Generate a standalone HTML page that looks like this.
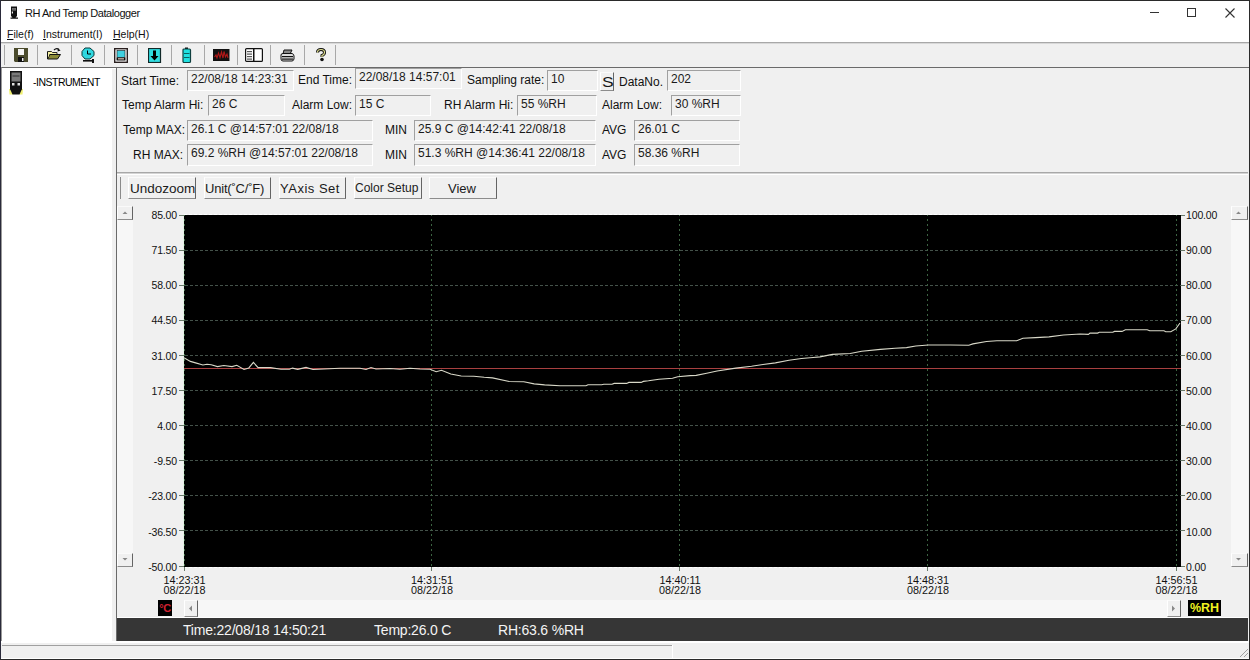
<!DOCTYPE html>
<html><head><meta charset="utf-8">
<style>
*{margin:0;padding:0;box-sizing:border-box}
html,body{width:1250px;height:660px;overflow:hidden;background:#f0f0f0;font-family:"Liberation Sans",sans-serif;color:#000}
.a{position:absolute}
.t{position:absolute;white-space:pre;line-height:1}
.lbl{position:absolute;white-space:pre;font-size:12px;line-height:1;color:#111}
.box{position:absolute;background:#f0f0f0;border-top:1px solid #a0a0a0;border-left:1px solid #a0a0a0;border-right:1px solid #fff;border-bottom:1px solid #fff}
.box span{position:absolute;left:3px;top:2px;font-size:12px;line-height:1;white-space:pre;color:#1a1a1a}
.btn{position:absolute;background:#f0f0f0;border-top:1px solid #fafafa;border-left:1px solid #fff;border-right:1px solid #646464;border-bottom:1px solid #8c8c8c;text-align:center;font-size:13px;line-height:1;color:#1a1a1a}
.sep{position:absolute;top:45px;width:1px;height:20px;background:#a8a8a8}
.ylab{position:absolute;font-size:10px;line-height:1;white-space:pre;color:#111}
</style></head><body>
<!-- title bar -->
<div class="a" style="left:0;top:0;width:1250px;height:42px;background:#fff"></div>
<div class="a" style="left:0;top:42px;width:1250px;height:1px;background:#a8a8a8"></div>
<!-- title icon -->
<svg class="a" style="left:10px;top:6px" width="9" height="14" viewBox="0 0 9 14">
<rect x="1" y="0.5" width="6" height="9.5" fill="#111"/><rect x="2" y="2" width="4" height="2.5" fill="#888"/>
<rect x="2.6" y="2.6" width="1" height="1" fill="#111"/><rect x="4.4" y="2.6" width="1" height="1" fill="#111"/>
<rect x="1.8" y="5.5" width="1.2" height="2" fill="#eee"/>
<path d="M1 10 H7 L5.5 11.5 H8 V12.8 H0.5 V11.5 H2.5 Z" fill="#111"/></svg>
<div class="t" style="left:25px;top:8px;font-size:11px;letter-spacing:-0.45px;color:#111">RH And Temp Datalogger</div>
<!-- window controls -->
<div class="a" style="left:1150px;top:12px;width:9px;height:1px;background:#333"></div>
<div class="a" style="left:1187px;top:8px;width:9px;height:9px;border:1px solid #333"></div>
<svg class="a" style="left:1225px;top:8px" width="10" height="10" viewBox="0 0 10 10"><path d="M0.5 0.5 L9.5 9.5 M9.5 0.5 L0.5 9.5" stroke="#333" stroke-width="1.1"/></svg>
<!-- menu -->
<div class="t" style="left:7px;top:29px;font-size:10.5px;color:#111"><u>F</u>ile(f)</div>
<div class="t" style="left:43px;top:29px;font-size:10.5px;color:#111"><u>I</u>nstrument(I)</div>
<div class="t" style="left:113px;top:29px;font-size:10.5px;color:#111"><u>H</u>elp(H)</div>
<!-- toolbar -->
<div class="a" style="left:1px;top:43px;width:1248px;height:24px;background:#f0f0f0;border-top:1px solid #d8d8d8"></div>
<div class="sep" style="left:4px"></div><div class="sep" style="left:37px"></div><div class="sep" style="left:71px"></div>
<div class="sep" style="left:104px"></div><div class="sep" style="left:137px"></div><div class="sep" style="left:171px"></div>
<div class="sep" style="left:204px"></div><div class="sep" style="left:237px"></div><div class="sep" style="left:270px"></div>
<div class="sep" style="left:304px"></div><div class="sep" style="left:335px"></div>
<!-- icons -->
<svg class="a" style="left:14px;top:48px" width="15" height="15" viewBox="0 0 15 15">
<path d="M0 0 H14 V14 H1 L0 13 Z" fill="#4b4b2c"/><rect x="4" y="1" width="6" height="6" fill="#f4f4f4"/>
<rect x="4" y="9" width="6" height="5" fill="#111"/><rect x="8" y="10" width="1.5" height="3" fill="#eee"/></svg>
<svg class="a" style="left:46px;top:47px" width="16" height="14" viewBox="0 0 16 14">
<path d="M8 3 Q10.5 0.5 13 2.5" stroke="#111" fill="none" stroke-width="1.2"/><path d="M11.8 1.2 L14.6 3.6 L11.6 4.4 Z" fill="#111"/>
<path d="M1.5 4.5 H5.5 L6.5 5.5 H11 V7.5 H1.5 Z" fill="#f4f0a0" stroke="#111" stroke-width="0.9"/>
<path d="M1.5 5 V12 L4 7.5 H14.5 L11.5 12 H1.5" fill="#8a8a38" stroke="#111" stroke-width="1"/>
<path d="M2 6 V10.5 L3.5 7.5 Z" fill="#f4f0a0"/></svg>
<svg class="a" style="left:81px;top:47px" width="14" height="17" viewBox="0 0 14 17">
<path d="M4 1 H9 L13 4.5 V8.5 L9 12 H4 L1 8.5 V4.5 Z" fill="#30d8e0" stroke="#0a3a3a" stroke-width="1"/>
<path d="M6.5 3.5 V7 H10" stroke="#000" fill="none" stroke-width="1"/>
<rect x="2" y="13" width="10" height="1.6" fill="#111"/><rect x="11" y="12" width="2" height="4" fill="#111"/></svg>
<svg class="a" style="left:114px;top:48px" width="15" height="15" viewBox="0 0 15 15">
<rect x="0.7" y="0.7" width="12.6" height="13.6" fill="#fff" stroke="#2a2020" stroke-width="1.4"/>
<rect x="3" y="2.5" width="8" height="7" fill="#40d0e0" stroke="#111" stroke-width="0.6"/><rect x="2.5" y="9.5" width="9" height="3" fill="#111"/><rect x="4" y="10.3" width="6" height="1.1" fill="#f0d8c8"/></svg>
<svg class="a" style="left:148px;top:48px" width="14" height="15" viewBox="0 0 14 15">
<rect x="0.5" y="0.5" width="12" height="14" fill="#30dce0" stroke="#102828" stroke-width="1.2"/>
<path d="M5 2.5 H8 V8 H10.5 L6.5 12.5 L2.5 8 H5 Z" fill="#000"/></svg>
<svg class="a" style="left:182px;top:47px" width="10" height="17" viewBox="0 0 10 17">
<rect x="3" y="0.5" width="3" height="2" fill="#111"/><rect x="1" y="2" width="7.5" height="13.5" rx="1" fill="#20e0e0" stroke="#104040" stroke-width="1.2"/>
<rect x="2" y="6" width="5.5" height="1" fill="#0a6060"/><rect x="2" y="10" width="5.5" height="1" fill="#0a6060"/></svg>
<svg class="a" style="left:213px;top:49px" width="17" height="12" viewBox="0 0 17 12">
<rect width="16.5" height="12" fill="#111"/><path d="M1.5 8 L3 6 L4 9 L5.5 4 L7 8.5 L8.5 3 L10 9 L11 2.5 L12.5 8 L14 5 L15 9" stroke="#b01818" fill="none" stroke-width="1.1"/></svg>
<svg class="a" style="left:245px;top:48px" width="18" height="14" viewBox="0 0 18 14">
<rect x="0.6" y="0.6" width="16.8" height="12.8" fill="#fff" stroke="#111" stroke-width="1.2" rx="1"/><rect x="8" y="0.5" width="1.5" height="13" fill="#111"/>
<rect x="2" y="3" width="5" height="1.2" fill="#555"/><rect x="2" y="5.5" width="5" height="1.2" fill="#555"/><rect x="2" y="8" width="5" height="1.2" fill="#555"/><rect x="2" y="10.5" width="5" height="1.2" fill="#555"/></svg>
<svg class="a" style="left:280px;top:49px" width="15" height="13" viewBox="0 0 15 13">
<path d="M4 1 H12 L10 5 H3 Z" fill="#888" stroke="#111" stroke-width="1"/>
<path d="M1 6 Q1 4.5 3 4.5 H12 Q14 5 14 7 V10 Q13.5 12 12 12 H3 Q1 12 1 10 Z" fill="#ddd" stroke="#111" stroke-width="1"/>
<rect x="2" y="7" width="11" height="1.2" fill="#111"/><rect x="2" y="9.5" width="11" height="1.2" fill="#111"/></svg>
<svg class="a" style="left:315px;top:48px" width="12" height="14" viewBox="0 0 12 14">
<path d="M2.5 4.5 Q2.5 1.5 6 1.5 Q9.5 1.5 9.5 4.5 Q9.5 6.5 7 7.5 V9" stroke="#111" stroke-width="3" fill="none"/>
<path d="M2.5 4.5 Q2.5 1.5 6 1.5 Q9.5 1.5 9.5 4.5 Q9.5 6.5 7 7.5 V9" stroke="#e0e090" stroke-width="1.2" fill="none"/>
<circle cx="7" cy="11.5" r="1.8" fill="#111"/></svg>
<!-- main dark line -->
<div class="a" style="left:1px;top:67px;width:1247px;height:1px;background:#6a6a6a"></div>
<div class="a" style="left:1px;top:68px;width:1247px;height:1px;background:#fff"></div>
<!-- left tree panel -->
<div class="a" style="left:1px;top:67px;width:111px;height:576px;background:#fff;border-left:1px solid #9a9a9a;border-top:1px solid #6a6a6a"></div>
<svg class="a" style="left:9px;top:70px" width="15" height="26" viewBox="0 0 15 26">
<path d="M0 19 L1 19 L4 24.5 L0.5 24.5 Z M14 19 L13 19 L10 24.5 L13.5 24.5 Z" fill="#f0f070"/>
<rect x="1" y="1" width="12" height="18.5" fill="#111"/><rect x="2.5" y="2.5" width="9" height="9" fill="#7a7a7a"/>
<rect x="3.5" y="5.5" width="7" height="1" fill="#333"/><rect x="3" y="13" width="2.5" height="2.5" fill="#e0e0e0"/><rect x="8.5" y="13" width="2.5" height="2.5" fill="#e0e0e0"/>
<path d="M1 19 H13 L10.5 24.5 H3.5 Z" fill="#111"/></svg>
<div class="t" style="left:33px;top:76.5px;font-size:10.5px;letter-spacing:-0.5px;color:#000">-INSTRUMENT</div>
<!-- right main panel -->
<div class="a" style="left:116px;top:67px;width:1133px;height:576px;background:#f0f0f0;border-left:1px solid #6a6a6a;border-top:1px solid #6a6a6a"></div>
<!-- info rows -->
<div class="lbl" style="left:121px;top:75px">Start Time:</div>
<div class="box" style="left:187px;top:70px;width:107px;height:21px"><span>22/08/18 14:23:31</span></div>
<div class="lbl" style="left:298px;top:74px">End Time:</div>
<div class="box" style="left:355px;top:68px;width:107px;height:21px"><span>22/08/18 14:57:01</span></div>
<div class="lbl" style="left:467px;top:74px">Sampling rate:</div>
<div class="box" style="left:547px;top:70px;width:51px;height:21px"><span>10</span></div>
<div class="btn" style="left:600px;top:72px;width:14px;height:19px"></div>
<div class="t" style="left:602px;top:75px;font-size:14px;transform:scaleX(1.25);transform-origin:0 0;color:#1a1a1a">S</div>
<div class="lbl" style="left:619px;top:76px">DataNo.</div>
<div class="box" style="left:667px;top:70px;width:74px;height:21px"><span>202</span></div>

<div class="lbl" style="left:122px;top:99px">Temp Alarm Hi:</div>
<div class="box" style="left:208px;top:95px;width:77px;height:21px"><span>26 C</span></div>
<div class="lbl" style="left:292px;top:99px">Alarm Low:</div>
<div class="box" style="left:355px;top:95px;width:76px;height:21px"><span>15 C</span></div>
<div class="lbl" style="left:444px;top:99px">RH Alarm Hi:</div>
<div class="box" style="left:517px;top:95px;width:80px;height:21px"><span>55 %RH</span></div>
<div class="lbl" style="left:602px;top:99px">Alarm Low:</div>
<div class="box" style="left:671px;top:95px;width:70px;height:21px"><span>30 %RH</span></div>

<div class="lbl" style="left:123px;top:124px">Temp MAX:</div>
<div class="box" style="left:187px;top:120px;width:186px;height:21px"><span>26.1 C @14:57:01 22/08/18</span></div>
<div class="lbl" style="left:385px;top:124px">MIN</div>
<div class="box" style="left:414px;top:120px;width:182px;height:21px"><span>25.9 C @14:42:41 22/08/18</span></div>
<div class="lbl" style="left:602px;top:124px">AVG</div>
<div class="box" style="left:634px;top:120px;width:106px;height:21px"><span>26.01 C</span></div>

<div class="lbl" style="left:133px;top:149px">RH MAX:</div>
<div class="box" style="left:187px;top:144px;width:186px;height:22px"><span>69.2 %RH @14:57:01 22/08/18</span></div>
<div class="lbl" style="left:385px;top:149px">MIN</div>
<div class="box" style="left:414px;top:144px;width:182px;height:22px"><span>51.3 %RH @14:36:41 22/08/18</span></div>
<div class="lbl" style="left:602px;top:149px">AVG</div>
<div class="box" style="left:634px;top:144px;width:106px;height:22px"><span>58.36 %RH</span></div>
<!-- separator -->
<div class="a" style="left:117px;top:172px;width:1131px;height:1px;background:#a8a8a8"></div>
<div class="a" style="left:117px;top:173px;width:1131px;height:1px;background:#d4d4d4"></div>
<div class="a" style="left:117px;top:174px;width:1131px;height:1px;background:#fff"></div>
<!-- buttons -->
<div class="a" style="left:120px;top:177px;width:1px;height:22px;background:#8a8a8a"></div>
<div class="btn" style="left:128px;top:177px;width:68px;height:22px"></div>
<div class="t" style="left:130px;top:182px;font-size:13.5px;color:#1a1a1a">Undozoom</div>
<div class="btn" style="left:204px;top:177px;width:67px;height:22px"></div>
<div class="t" style="left:205px;top:182px;font-size:13px;letter-spacing:-0.2px;color:#1a1a1a">Unit(˚C/˚F)</div>
<div class="btn" style="left:279px;top:177px;width:67px;height:22px"></div>
<div class="t" style="left:280px;top:182px;font-size:13px;letter-spacing:0.5px;color:#1a1a1a">YAxis Set</div>
<div class="btn" style="left:354px;top:177px;width:68px;height:22px"></div>
<div class="t" style="left:355px;top:182px;font-size:12px;color:#1a1a1a">Color Setup</div>
<div class="btn" style="left:429px;top:177px;width:68px;height:22px"></div>
<div class="t" style="left:448px;top:182px;font-size:13px;color:#1a1a1a">View</div>
<!-- vertical scrollbars -->
<div class="a" style="left:117px;top:206px;width:16px;height:361px;background:#f7f7f7"></div>
<div class="btn" style="left:117px;top:206px;width:16px;height:14px"></div>
<div class="btn" style="left:117px;top:553px;width:16px;height:14px"></div>
<div class="a" style="left:1231px;top:206px;width:17px;height:361px;background:#f7f7f7"></div>
<div class="btn" style="left:1231px;top:206px;width:17px;height:14px"></div>
<div class="btn" style="left:1231px;top:553px;width:17px;height:14px"></div>
<!-- chart svg -->
<svg class="a" style="left:0;top:0" width="1250" height="660" viewBox="0 0 1250 660">
<path d="M122.5 214 L125 211.5 L127.5 214 Z M1236 214 L1238.5 211.5 L1241 214Z" fill="#888"/>
<path d="M122.5 558 L125 560.5 L127.5 558 Z M1236 558 L1238.5 560.5 L1241 558Z" fill="#888"/>
<rect x="184" y="215" width="997" height="352" fill="#000"/>
<g stroke="#44524a" stroke-width="1" stroke-dasharray="3 2">
<path d="M185 250.5 H1181 M185 285.5 H1181 M185 320.5 H1181 M185 355.5 H1181 M185 390.5 H1181 M185 425.5 H1181 M185 460.5 H1181 M185 495.5 H1181 M185 530.5 H1181"/>
</g>
<g stroke="#3c6442" stroke-width="1" stroke-dasharray="2 3" stroke-dashoffset="1">
<path d="M431.5 215 V567 M679.5 215 V567 M927.5 215 V567 M1176.5 215 V567"/>
</g>
<path d="M184 214.5 H1181" stroke="#ffffff" stroke-width="1" stroke-dasharray="3 2"/>
<path d="M184 567.5 H1181" stroke="#ffffff" stroke-width="1" stroke-dasharray="3 2"/>
<path d="M183.5 215 V567" stroke="#e4f0e4" stroke-width="1"/>
<path d="M184.5 215 V567" stroke="#3c6442" stroke-width="1" stroke-dasharray="2 3" stroke-dashoffset="1"/>
<g stroke="#6a7a6a" stroke-width="1">
<path d="M179 215.5 H184 M179 250.5 H184 M179 285.5 H184 M179 320.5 H184 M179 355.5 H184 M179 390.5 H184 M179 425.5 H184 M179 460.5 H184 M179 495.5 H184 M179 530.5 H184 M179 566.5 H184"/>
<path d="M1181 215.5 H1185 M1181 250.5 H1185 M1181 285.5 H1185 M1181 320.5 H1185 M1181 355.5 H1185 M1181 390.5 H1185 M1181 425.5 H1185 M1181 460.5 H1185 M1181 495.5 H1185 M1181 530.5 H1185 M1181 566.5 H1185"/>
<path d="M184.5 567 V571 M431.5 567 V571 M679.5 567 V571 M927.5 567 V571 M1176.5 567 V571"/>
</g>
<path d="M184 368.5 H1181" stroke="#a84040" stroke-width="1"/>
<path d="M184.0,357.7 L190.4,361.4 L195.6,362.9 L202.9,365.0 L207.0,364.2 L211.2,364.8 L217.5,366.6 L223.8,365.5 L232.0,366.6 L236.8,365.3 L244.0,369.4 L248.8,367.9 L253.4,362.4 L258.1,367.6 L270.6,367.6 L281.0,369.2 L289.4,369.2 L292.5,368.1 L297.7,369.4 L306.0,367.4 L313.0,369.5 L340.0,368.3 L360.0,368.3 L366.0,369.5 L371.0,367.5 L376.0,369.0 L390.0,368.5 L400.0,369.2 L410.0,368.3 L420.0,369.0 L430.0,369.3 L436.2,371.7 L441.5,370.3 L450.8,374.0 L461.2,376.0 L473.8,376.2 L484.2,377.3 L492.5,377.9 L509.2,381.5 L523.8,381.8 L534.2,383.9 L544.6,384.9 L560.0,385.8 L586.0,385.8 L588.0,384.8 L601.7,384.8 L603.8,384.2 L612.0,384.2 L614.2,383.4 L626.7,383.4 L628.8,382.4 L641.2,382.4 L643.3,381.4 L648.5,380.8 L659.0,379.3 L672.5,378.2 L677.7,376.7 L690.2,375.6 L696.2,375.4 L706.7,373.3 L717.1,371.0 L735.8,368.1 L751.5,366.2 L763.0,364.5 L775.4,362.9 L789.0,360.3 L801.5,358.5 L813.0,357.5 L820.0,356.9 L832.5,354.4 L850.2,353.5 L861.7,351.2 L880.4,349.4 L895.0,348.3 L906.5,347.6 L915.8,346.0 L928.3,345.0 L950.2,345.0 L968.8,345.2 L972.9,343.9 L986.5,341.5 L996.9,340.7 L1016.7,340.7 L1022.9,338.3 L1035.4,337.6 L1049.0,336.9 L1063.5,335.0 L1080.2,334.0 L1088.4,334.4 L1090.0,333.1 L1097.6,333.1 L1099.3,332.3 L1112.8,332.3 L1114.5,331.4 L1122.0,331.4 L1125.4,329.7 L1147.2,329.7 L1149.7,330.8 L1164.0,330.8 L1165.7,331.7 L1170.8,331.7 L1175.8,328.9 L1180.0,323.0" stroke="#d8d8c8" stroke-width="1.1" fill="none"/>
</svg>
<!-- y labels left -->
<div class="ylab" style="left:120px;width:57px;text-align:right;top:209.8px;font-size:10.5px;letter-spacing:-0.15px">85.00</div>
<div class="ylab" style="left:120px;width:57px;text-align:right;top:245.0px;font-size:10.5px;letter-spacing:-0.15px">71.50</div>
<div class="ylab" style="left:120px;width:57px;text-align:right;top:280.2px;font-size:10.5px;letter-spacing:-0.15px">58.00</div>
<div class="ylab" style="left:120px;width:57px;text-align:right;top:315.4px;font-size:10.5px;letter-spacing:-0.15px">44.50</div>
<div class="ylab" style="left:120px;width:57px;text-align:right;top:350.6px;font-size:10.5px;letter-spacing:-0.15px">31.00</div>
<div class="ylab" style="left:120px;width:57px;text-align:right;top:385.8px;font-size:10.5px;letter-spacing:-0.15px">17.50</div>
<div class="ylab" style="left:120px;width:57px;text-align:right;top:421.0px;font-size:10.5px;letter-spacing:-0.15px">4.00</div>
<div class="ylab" style="left:120px;width:57px;text-align:right;top:456.2px;font-size:10.5px;letter-spacing:-0.15px">-9.50</div>
<div class="ylab" style="left:120px;width:57px;text-align:right;top:491.4px;font-size:10.5px;letter-spacing:-0.15px">-23.00</div>
<div class="ylab" style="left:120px;width:57px;text-align:right;top:526.6px;font-size:10.5px;letter-spacing:-0.15px">-36.50</div>
<div class="ylab" style="left:120px;width:57px;text-align:right;top:561.8px;font-size:10.5px;letter-spacing:-0.15px">-50.00</div>
<!-- y labels right -->
<div class="ylab" style="left:1186px;top:209.8px;font-size:10.5px;letter-spacing:-0.15px">100.00</div>
<div class="ylab" style="left:1186px;top:245.0px;font-size:10.5px;letter-spacing:-0.15px">90.00</div>
<div class="ylab" style="left:1186px;top:280.2px;font-size:10.5px;letter-spacing:-0.15px">80.00</div>
<div class="ylab" style="left:1186px;top:315.4px;font-size:10.5px;letter-spacing:-0.15px">70.00</div>
<div class="ylab" style="left:1186px;top:350.6px;font-size:10.5px;letter-spacing:-0.15px">60.00</div>
<div class="ylab" style="left:1186px;top:385.8px;font-size:10.5px;letter-spacing:-0.15px">50.00</div>
<div class="ylab" style="left:1186px;top:421.0px;font-size:10.5px;letter-spacing:-0.15px">40.00</div>
<div class="ylab" style="left:1186px;top:456.2px;font-size:10.5px;letter-spacing:-0.15px">30.00</div>
<div class="ylab" style="left:1186px;top:491.4px;font-size:10.5px;letter-spacing:-0.15px">20.00</div>
<div class="ylab" style="left:1186px;top:526.6px;font-size:10.5px;letter-spacing:-0.15px">10.00</div>
<div class="ylab" style="left:1186px;top:561.8px;font-size:10.5px;letter-spacing:-0.15px">0.00</div>
<!-- x labels -->
<div class="ylab" style="left:144.5px;width:80px;text-align:center;top:574.5px;line-height:10px;font-size:10.8px">14:23:31<br>08/22/18</div>
<div class="ylab" style="left:392.0px;width:80px;text-align:center;top:574.5px;line-height:10px;font-size:10.8px">14:31:51<br>08/22/18</div>
<div class="ylab" style="left:640.0px;width:80px;text-align:center;top:574.5px;line-height:10px;font-size:10.8px">14:40:11<br>08/22/18</div>
<div class="ylab" style="left:888.0px;width:80px;text-align:center;top:574.5px;line-height:10px;font-size:10.8px">14:48:31<br>08/22/18</div>
<div class="ylab" style="left:1136.5px;width:80px;text-align:center;top:574.5px;line-height:10px;font-size:10.8px">14:56:51<br>08/22/18</div>
<!-- h scrollbar -->
<div class="a" style="left:184px;top:600px;width:997px;height:17px;background:#f7f7f7"></div>
<div class="btn" style="left:184px;top:600px;width:14px;height:17px"></div>
<div class="btn" style="left:1167px;top:600px;width:14px;height:17px"></div>
<svg class="a" style="left:0;top:0" width="1250" height="660"><path d="M189 608.5 L192 605.5 V611.5Z M1175 608.5 L1172 605.5 V611.5Z" fill="#888"/></svg>
<div class="a" style="left:158px;top:600px;width:14px;height:16px;background:#000;color:#d02030;font-weight:bold;font-size:11px;line-height:16px;text-align:center;letter-spacing:-0.5px">°C</div>
<div class="a" style="left:1188px;top:600px;width:33px;height:16px;background:#000;color:#f0f020;font-weight:bold;font-size:12.5px;line-height:16px;text-align:center">%RH</div>
<!-- status dark bar -->
<div class="a" style="left:117px;top:617px;width:1131px;height:1px;background:#fff"></div>
<div class="a" style="left:117px;top:618px;width:1131px;height:23px;background:#363636"></div>
<div class="t" style="left:183px;top:623px;font-size:14px;letter-spacing:-0.2px;color:#f4f4f4">Time:22/08/18 14:50:21</div>
<div class="t" style="left:374px;top:623px;font-size:14px;letter-spacing:-0.2px;color:#f4f4f4">Temp:26.0 C</div>
<div class="t" style="left:498px;top:623px;font-size:14px;letter-spacing:-0.2px;color:#f4f4f4">RH:63.6 %RH</div>
<!-- bottom status bar -->
<div class="a" style="left:1px;top:641px;width:1248px;height:18px;background:#f0f0f0;border-top:2px solid #fff"></div>
<div class="a" style="left:2px;top:645px;width:670px;height:1px;background:#a0a0a0"></div>
<div class="a" style="left:672px;top:645px;width:1px;height:13px;background:#fff"></div>
<div class="a" style="left:1px;top:658px;width:1248px;height:1px;background:#fff"></div>
<svg class="a" style="left:1238px;top:647px" width="11" height="11"><path d="M10 2 L2 10 M10 6 L6 10" stroke="#a0a0a0" stroke-width="1"/></svg>
<!-- window borders -->
<div class="a" style="left:0;top:0;width:1250px;height:1px;background:#2a2a2a"></div>
<div class="a" style="left:0;top:0;width:1px;height:660px;background:#2a2a3a"></div>
<div class="a" style="left:1249px;top:0;width:1px;height:660px;background:#2a2a2a"></div>
<div class="a" style="left:0;top:659px;width:1250px;height:1px;background:#2a2a2a"></div>
</body></html>
